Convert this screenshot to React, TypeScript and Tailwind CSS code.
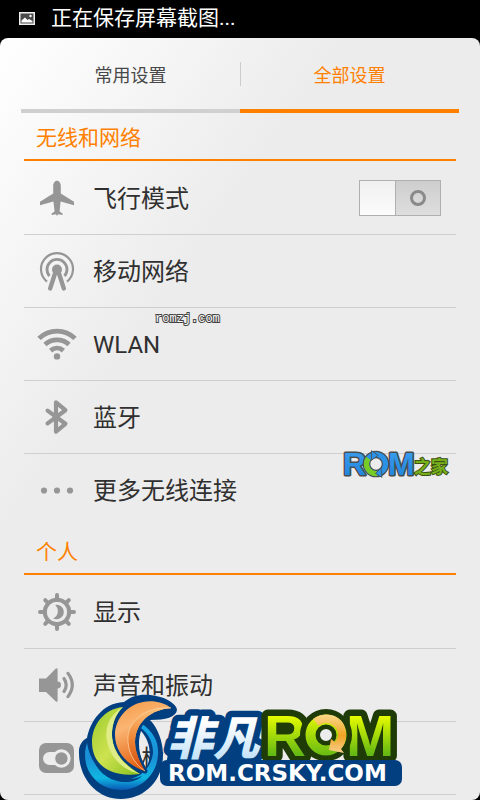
import React from "react";

const GREY = "#969696";

function PictureIcon() {
  return (
    <svg width="16" height="13" viewBox="0 0 16 13" aria-hidden="true">
      <rect x="0.75" y="0.75" width="14.5" height="11.5" fill="#4a4a4a" stroke="#f0f0f0" strokeWidth="1.5" />
      <path d="M2.5 10.5V8.5L6 5.5L8.5 8L10 7L13.5 9V10.5Z" fill="#fff" />
      <circle cx="11.5" cy="4" r="1.2" fill="#fff" />
    </svg>
  );
}

function PlaneIcon() {
  return (
    <svg width="40" height="40" viewBox="0 0 40 40" aria-hidden="true">
      <path
        fill={GREY}
        d="M20 2.8C22.4 2.8 23.8 5.4 23.8 8V15.4L37 23.8V27.2L23.6 23.4L22.6 33.4L25.6 35.4V37L21 36.2L20 38L19 36.2L14.6 37V35.4L17.6 33.4L16.4 23.4L3 27.2V23.8L16.2 15.4V8C16.2 5.4 17.6 2.8 20 2.8Z"
      />
    </svg>
  );
}

function TowerIcon() {
  return (
    <svg width="40" height="40" viewBox="0 0 40 40" fill="none" stroke={GREY} aria-hidden="true">
      <path d="M10 30.6A16 16 0 1 1 30 30.6" strokeWidth="2.2" />
      <path d="M12.5 25A10 10 0 1 1 27.5 25" strokeWidth="2.8" />
      <circle cx="20" cy="18.5" r="5" fill={GREY} stroke="none" />
      <path d="M18.8 20L13.2 37.4M21.2 20L26.8 37.4" strokeWidth="4.4" strokeLinecap="round" />
    </svg>
  );
}

function WifiIcon() {
  return (
    <svg width="40" height="40" viewBox="0 0 40 40" fill="none" stroke={GREY} strokeWidth="4.8" aria-hidden="true">
      <path d="M2 14.4C12 4.6 28 4.6 38 14.4" />
      <path d="M8 20.6C14.6 14.4 25.4 14.4 32 20.6" />
      <path d="M13.6 26.6C17.4 23.2 22.6 23.2 26.4 26.6" />
      <circle cx="20" cy="32.4" r="3.2" fill={GREY} stroke="none" />
    </svg>
  );
}

function BluetoothIcon() {
  return (
    <svg width="40" height="40" viewBox="0 0 40 40" aria-hidden="true">
      <path
        d="M10.6 13.6L28.4 26.8L19 34.6V5.4L28.4 13.2L10.6 26.4"
        fill="none"
        stroke={GREY}
        strokeWidth="4.2"
        strokeLinecap="round"
        strokeLinejoin="round"
      />
    </svg>
  );
}

function DotsIcon() {
  return (
    <svg width="40" height="40" viewBox="0 0 40 40" fill={GREY} aria-hidden="true">
      <circle cx="7" cy="19.5" r="3.1" />
      <circle cx="20" cy="19.5" r="3.1" />
      <circle cx="33" cy="19.5" r="3.1" />
    </svg>
  );
}

function DisplayIcon() {
  return (
    <svg width="40" height="40" viewBox="0 0 40 40" aria-hidden="true">
      <g stroke={GREY} strokeWidth="4" strokeLinecap="round">
        <path d="M20 3V8M20 32V37M3 20H8M32 20H37M8.2 8.2L11 11M29 29L31.8 31.8M31.8 8.2L29 11M11 29L8.2 31.8" />
      </g>
      <circle cx="20" cy="20" r="12.2" fill="none" stroke={GREY} strokeWidth="4" />
      <path d="M18.2 12.9A7.2 7.2 0 1 1 16 26.2C21.5 24.4 22.5 17 18.2 12.9Z" fill={GREY} />
    </svg>
  );
}

function SoundIcon() {
  return (
    <svg width="40" height="40" viewBox="0 0 40 40" aria-hidden="true">
      <path fill={GREY} d="M2 13.6H9L18.6 3.8Q20.6 2.4 20.6 4.4V16.6A3.4 3.4 0 0 1 20.6 23.4V35.6Q20.6 37.6 18.6 36.2L9 27H2Z" />
      <g fill="none" stroke={GREY} strokeWidth="3.2" strokeLinecap="round">
        <path d="M27 13.5Q31.4 20 27 26.5" />
        <path d="M31 8.4Q39.6 20 31 31.6" />
      </g>
    </svg>
  );
}

function ToggleIcon() {
  return (
    <svg width="40" height="40" viewBox="0 0 40 40" aria-hidden="true">
      <rect x="2" y="5" width="35" height="30" rx="7" fill={GREY} />
      <circle cx="12.5" cy="20.5" r="6.5" fill="#ececec" />
      <path d="M12 14H24V27H12Z" fill="#ececec" />
      <circle cx="24.4" cy="20.5" r="9.2" fill="#ececec" />
      <circle cx="24.4" cy="20.5" r="6.2" fill={GREY} />
    </svg>
  );
}

function Tab({ label, active }: { label: string; active?: boolean }) {
  return (
    <button
      type="button"
      role="tab"
      aria-selected={!!active}
      className={`flex flex-1 items-center justify-center border-b-4 pt-1 text-[18px] leading-6 ${
        active ? "border-[#ff8000] text-[#ff8000]" : "border-[#d0d0d0] text-[#484848]"
      }`}
    >
      {label}
    </button>
  );
}

function Section({ title, children }: { title: string; children: React.ReactNode }) {
  return (
    <section>
      <h2 className="flex h-12 items-center border-b-2 border-[#ff8000] pt-1 pl-3 text-[21px] leading-6 text-[#ff8000]">
        {title}
      </h2>
      <ul className="divide-y divide-[#cfcfcf] pt-px">{children}</ul>
    </section>
  );
}

function Row({ icon, label, children }: { icon: React.ReactNode; label: string; children?: React.ReactNode }) {
  return (
    <li className="flex h-[73px] items-center pr-[15px] pl-[13px]">
      <button type="button" className="flex flex-1 items-center gap-4 text-left text-[24px] leading-8 text-[#303030]">
        {icon}
        <span className="pt-px">{label}</span>
      </button>
      {children}
    </li>
  );
}

function AirplaneSwitch() {
  return (
    <label className="relative flex h-9 w-[82px] border border-[#b0b0b0] bg-linear-to-b from-[#cecece] to-[#dedede]">
      <input type="checkbox" role="switch" aria-label="飞行模式" className="absolute inset-0 m-0 h-full w-full appearance-none" />
      <span className="w-9 border-r border-[#b0b0b0] bg-linear-to-b from-[#f0f0f0] to-[#fcfcfc]" />
      <span className="flex flex-1 items-center justify-center">
        <span className="h-4 w-4 rounded-full border-3 border-[#8a8a8a]" />
      </span>
    </label>
  );
}

function RomHomeLogo() {
  return (
    <svg width="112" height="34" viewBox="0 0 112 34" className="absolute top-[447px] left-[340px]" aria-hidden="true">
      <defs>
        <linearGradient id="homeBlue" x1="0" y1="0" x2="0" y2="1">
          <stop offset="0" stopColor="#3fa0ee" />
          <stop offset="1" stopColor="#1b83dc" />
        </linearGradient>
      </defs>
      <g fontFamily="'Liberation Sans', Arial, sans-serif" fontWeight="700" fontSize="32" fill="url(#homeBlue)" stroke="#484d50" strokeWidth="3" strokeLinejoin="round" paintOrder="stroke">
        <text x="3" y="28">R</text>
        <text x="48" y="28">M</text>
      </g>
      <circle cx="36" cy="17" r="9.5" fill="none" stroke="#484d50" strokeWidth="7.6" />
      <circle cx="36" cy="17" r="9.5" fill="none" stroke="#2b92e6" strokeWidth="5.2" />
      <path d="M37 26.5A9.5 9.5 0 0 1 28.4 11.4" fill="none" stroke="#76cb24" strokeWidth="5.2" />
      <path d="M31.5 3.6L38 8.4L31.5 13.2Z" fill="#2b92e6" stroke="#484d50" strokeWidth="0.8" />
      <path d="M41 21L35.5 26.4L42 30.4Z" fill="#2b92e6" stroke="#484d50" strokeWidth="0.8" />
      <text x="74" y="26" fontSize="17" fontWeight="700" fontFamily="'Noto Sans CJK SC', sans-serif" fill="#76b01d" stroke="#3e5013" strokeWidth="2" paintOrder="stroke">之家</text>
    </svg>
  );
}

function CrskyLogo() {
  return (
    <svg width="340" height="110" viewBox="74 690 340 110" className="absolute bottom-0 left-[74px]" aria-hidden="true">
      <defs>
        <linearGradient id="limeMoon" x1="0" y1="0" x2="1" y2="1">
          <stop offset="0" stopColor="#9ccb2c" />
          <stop offset="0.5" stopColor="#cde250" />
          <stop offset="1" stopColor="#86bf1c" />
        </linearGradient>
        <linearGradient id="orangeMoon" x1="0" y1="0" x2="0.3" y2="1">
          <stop offset="0" stopColor="#f49a45" />
          <stop offset="0.4" stopColor="#fbb573" />
          <stop offset="1" stopColor="#e2600f" />
        </linearGradient>
        <linearGradient id="orangeEdge" x1="0" y1="0" x2="0" y2="1">
          <stop offset="0" stopColor="#fdc27a" />
          <stop offset="0.5" stopColor="#ee8434" />
          <stop offset="1" stopColor="#d2480a" />
        </linearGradient>
        <linearGradient id="ringBlue" x1="0" y1="0" x2="0" y2="1">
          <stop offset="0" stopColor="#16a8e6" />
          <stop offset="0.5" stopColor="#1a8fd6" />
          <stop offset="0.82" stopColor="#10b6e2" />
          <stop offset="1" stopColor="#0a58b4" />
        </linearGradient>
        <linearGradient id="ice" x1="0" y1="0" x2="0" y2="1">
          <stop offset="0.3" stopColor="#ffffff" />
          <stop offset="0.9" stopColor="#bfe0f8" />
        </linearGradient>
        <linearGradient id="lime" x1="0" y1="0" x2="0" y2="1">
          <stop offset="0.2" stopColor="#e6fb00" />
          <stop offset="0.8" stopColor="#62b814" />
        </linearGradient>
        <linearGradient id="limeRing" gradientUnits="userSpaceOnUse" x1="0" y1="714" x2="0" y2="757">
          <stop offset="0" stopColor="#e6fb00" />
          <stop offset="1" stopColor="#62b814" />
        </linearGradient>
        <linearGradient id="arrowOrange" x1="0" y1="0" x2="0" y2="1">
          <stop offset="0" stopColor="#fbd98a" />
          <stop offset="0.55" stopColor="#f0a424" />
          <stop offset="1" stopColor="#f8cf8c" />
        </linearGradient>
      </defs>
      <path
        fill="#023f80"
        fillRule="evenodd"
        d="M79 751C79 746 82 740 87 738C90 722 102 703 124 702C132 695 144 693 156 696C168 698 177 705 177 710C176 717 166 720 150 720C158 728 163 742 163 755C163 781 144 799 121 799C96 799 78 777 79 751ZM141 731C137 743 139 757 146 768C152 757 151 742 141 731Z"
      />
      <path d="M142 724C154 732 159 743 158 755C157 774 141 790 121 790C101 790 85 775 85 755C85 750 86 746 87 743C90 762 101 774 119 780C140 781 151 768 153 753C153 743 149 734 141 728Z" fill="url(#ringBlue)" />
      <path d="M142 776C126 783 103 780 92 757C97 772 110 782 125 782C132 782 138 780 142 776Z" fill="#023f80" />
      <path d="M123 707C103 709 92 726 92 742C92 764 109 778 140 774C123 764 111 748 112 732C113 720 117 713 123 707Z" fill="url(#limeMoon)" />
      <path d="M123 707C107 716 103 732 109 748C114 761 124 770 140 774C122 765 111 749 112 732C113 720 117 713 123 707Z" fill="#e0ed86" />
      <path d="M171 708C164 702 152 700 143 702C127 705 115 719 115 735C115 752 128 766 145 771C137 758 133 746 136 734C140 720 151 710 171 708Z" fill="url(#orangeMoon)" stroke="#023f80" strokeWidth="5" strokeLinejoin="round" paintOrder="stroke" />
      <path d="M171 708C148 706 130 719 128 736C127 750 133 763 145 771C137 758 133 746 136 734C140 720 151 710 171 708Z" fill="url(#orangeEdge)" />
      <path d="M171 708C148 706 130 719 128 736C127 750 133 763 145 771" fill="none" stroke="#fbd0a0" strokeWidth="0.8" />
      <path d="M174 720H256V765H166Z" fill="#023f80" />
      <text x="167" y="755" fontSize="46" fontWeight="900" fontStyle="italic" fontFamily="'Noto Sans CJK SC', sans-serif" fill="url(#ice)" stroke="#023f80" strokeWidth="13" strokeLinejoin="round" paintOrder="stroke">非凡</text>
      <g fontFamily="'Liberation Sans', Arial, sans-serif" fontWeight="700" fontSize="58" fill="url(#lime)" stroke="#1f3b08" strokeWidth="13" strokeLinejoin="round" paintOrder="stroke">
        <text x="264" y="756">R</text>
        <text x="346" y="756">M</text>
      </g>
      <circle cx="326" cy="735" r="16" fill="none" stroke="#1f3b08" strokeWidth="20" />
      <circle cx="326" cy="735" r="15.5" fill="none" stroke="url(#limeRing)" strokeWidth="10" />
      <path d="M313 719C324 711 339 714 344 725C348 735 346 743 341 749L344 753L329 750L331 739L335 742C339 737 339 731 335 727C330 722 323 722 319 726Z" fill="url(#arrowOrange)" />
      <rect x="160" y="760" width="242" height="26" rx="7" fill="#023f80" />
      <text x="168" y="781" fontSize="23" fontWeight="700" fontFamily="'DejaVu Sans', sans-serif" fill="#fff">ROM.CRSKY.COM</text>
    </svg>
  );
}

export default function App() {
  return (
    <div className="relative flex h-screen flex-col overflow-hidden bg-black font-[Roboto,'Noto_Sans_CJK_SC',sans-serif]">
      <header className="flex h-[38px] shrink-0 items-center gap-4 pb-0.5 pl-[19px] text-[21px] leading-8 text-white">
        <PictureIcon />
        正在保存屏幕截图...
      </header>
      <main className="flex-1 overflow-hidden rounded-lg bg-[#ececec] bg-linear-[125deg,#ffffff_0%,#ececec_34%]">
        <div role="tablist" className="relative mx-[21px] flex h-[75px]">
          <Tab label="常用设置" />
          <span className="absolute top-6 left-1/2 h-6 w-px bg-[#cccccc]" />
          <Tab label="全部设置" active />
        </div>
        <div className="mx-6">
          <Section title="无线和网络">
            <Row icon={<PlaneIcon />} label="飞行模式">
              <AirplaneSwitch />
            </Row>
            <Row icon={<TowerIcon />} label="移动网络" />
            <Row icon={<WifiIcon />} label="WLAN" />
            <Row icon={<BluetoothIcon />} label="蓝牙" />
            <Row icon={<DotsIcon />} label="更多无线连接" />
          </Section>
          <Section title="个人">
            <Row icon={<DisplayIcon />} label="显示" />
            <Row icon={<SoundIcon />} label="声音和振动" />
            <Row icon={<ToggleIcon />} label="通知栏" />
            <li className="h-2" aria-hidden="true" />
          </Section>
        </div>
      </main>
      <svg width="80" height="18" viewBox="0 0 80 18" className="absolute top-[309px] left-[152px]" aria-hidden="true">
        <text x="3" y="13" fontSize="12" fontFamily="'Liberation Mono', monospace" fill="#fff" stroke="#444" strokeWidth="2" paintOrder="stroke">romzj.com</text>
      </svg>
      <RomHomeLogo />
      <CrskyLogo />
    </div>
  );
}
